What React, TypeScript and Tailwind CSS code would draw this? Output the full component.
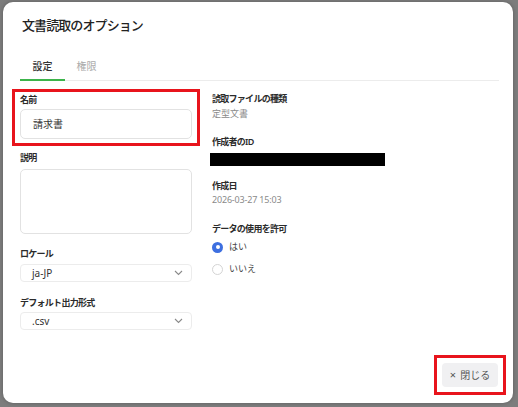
import React from "react";

const FONT = {
  fontFamily: '"Noto Sans", "Noto Sans CJK JP", sans-serif',
};

const Label = ({ children, className = "" }: { children: React.ReactNode; className?: string }) => (
  <div className={`text-[9px] leading-[14px] font-semibold tracking-[-0.08em] text-[#2b2b2b] ${className}`}>
    {children}
  </div>
);

const Chevron = () => (
  <svg width="9" height="6" viewBox="0 0 9 6" fill="none">
    <path d="M1 1l3.5 3.5L8 1" stroke="#8a8a8a" strokeWidth="1.1" />
  </svg>
);

const SelectBox = ({ value, className = "" }: { value: string; className?: string }) => (
  <div
    className={`flex h-[18px] items-center justify-between rounded-[4px] border border-[#ececec] pl-[11px] pr-[8px] text-[10px] text-[#333] ${className}`}
  >
    <span>{value}</span>
    <Chevron />
  </div>
);

const Radio = ({ checked, label, className = "" }: { checked: boolean; label: string; className?: string }) => (
  <div className={`flex h-[14px] items-center gap-[6px] pl-[2px] ${className}`}>
    {checked ? (
      <span className="flex h-[11px] w-[11px] items-center justify-center rounded-full bg-[#3d6fe0]">
        <span className="h-[4px] w-[4px] rounded-full bg-white" />
      </span>
    ) : (
      <span className="h-[11px] w-[11px] rounded-full border border-[#d4d4d4] bg-white" />
    )}
    <span className="text-[9px] text-[#444]">{label}</span>
  </div>
);

export default function App() {
  return (
    <div
      className="flex h-[407px] w-[518px] bg-[#7d7d7d] pb-[4px] pl-[3px] pr-[5px] pt-[2px]"
      style={FONT}
    >
      <div className="flex flex-1 flex-col rounded-[10px] bg-white pl-[17px] pr-[14px] shadow-[0_0_4px_rgba(0,0,0,0.25)]">
        <h1 className="pl-[2px] pt-[13px] text-[13px] leading-[20px] font-medium tracking-[-0.07em] text-[#222]">
          文書読取のオプション
        </h1>

        <div className="mt-[24px] flex border-b border-[#ececec]">
          <div className="-mb-px w-[45px] border-b-2 border-[#3cb44b] pb-[6px] text-center text-[10px] leading-[14px] font-medium text-[#333]">
            設定
          </div>
          <div className="-mb-px w-[43px] border-b-2 border-transparent pb-[6px] text-center text-[10px] leading-[14px] text-[#aaa]">
            権限
          </div>
        </div>

        <div className="mt-[8px] flex gap-[18px]">
          <div className="flex w-[172px] flex-col">
            <div className="-mx-[8px] border-[3px] border-[#e8141c] px-[5px] pb-[4px] pt-[1px]">
              <Label>名前</Label>
              <div className="mt-[2px] flex h-[30px] items-center rounded-[5px] border border-[#e2e2e2] pl-[12px] text-[10px] text-[#333]">
                請求書
              </div>
            </div>

            <Label className="mt-[5px]">説明</Label>
            <div className="mt-[4px] h-[65px] rounded-[5px] border border-[#e2e2e2]" />

            <Label className="mt-[13px]">ロケール</Label>
            <SelectBox value="ja-JP" className="mt-[3px]" />

            <Label className="mt-[14px]">デフォルト出力形式</Label>
            <SelectBox value=".csv" className="mt-[2px]" />
          </div>

          <div className="flex flex-col pt-[3px]">
            <Label className="pl-[2px]">読取ファイルの種類</Label>
            <div className="mt-[1px] pl-[2px] text-[9px] leading-[14px] text-[#8a8a8a]">定型文書</div>

            <Label className="mt-[14px] pl-[2px]">作成者のID</Label>
            <div className="mt-[4px] h-[13px] w-[175px] bg-black" />

            <Label className="mt-[13px] pl-[2px]">作成日</Label>
            <div className="pl-[2px] text-[9px] leading-[14px] tracking-[-0.02em] text-[#8a8a8a]">2026-03-27 15:03</div>

            <Label className="mt-[15px] pl-[2px]">データの使用を許可</Label>
            <Radio checked label="はい" className="mt-[4px]" />
            <Radio checked={false} label="いいえ" className="mt-[8px]" />
          </div>
        </div>

        <div className="mt-auto -mr-[7px] mb-[8px] flex justify-end">
          <div className="border-[3px] border-[#e8141c] p-[5px]">
            <button className="flex h-[24px] w-[56px] items-center justify-center gap-[4px] rounded-[4px] bg-[#f0f0f2] text-[10px] text-[#555]">
              <span className="text-[11px]">×</span>
              <span>閉じる</span>
            </button>
          </div>
        </div>
      </div>
    </div>
  );
}
